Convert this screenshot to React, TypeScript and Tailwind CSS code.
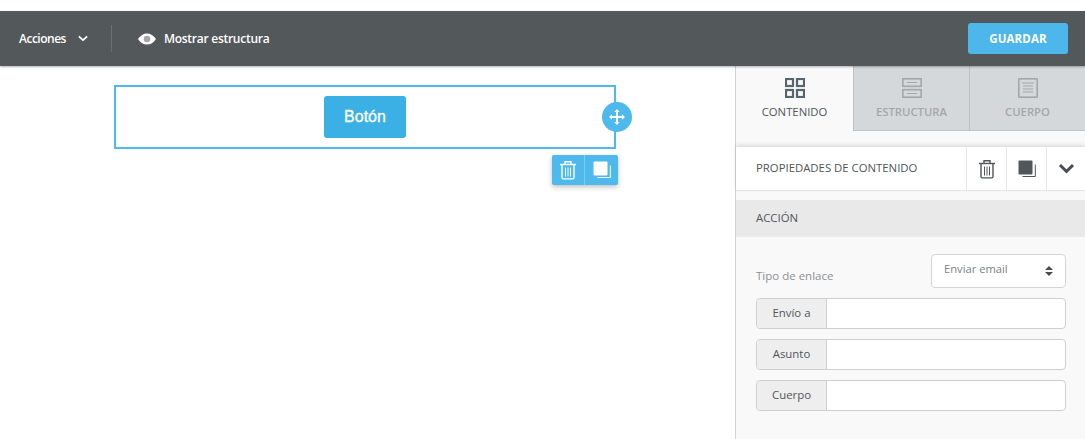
import React from "react";

function Trash({ className }: { className?: string }) {
  return (
    <svg viewBox="0 0 18 20" width="18" height="20" fill="none" stroke="currentColor" className={className}>
      <path d="M1 4.500h16" strokeWidth="1.400" />
      <path d="M6 4V1.700h6V4" strokeWidth="1.400" />
      <path d="M3 5v12.600c0 .8.5 1.300 1.200 1.300h9.600c.7 0 1.200-.5 1.200-1.300V5" strokeWidth="1.400" />
      <path d="M6.500 7.500v9M9 7.500v9M11.500 7.500v9" strokeWidth="1" />
    </svg>
  );
}

function Copy({ className }: { className?: string }) {
  return (
    <svg viewBox="0 0 18 18" width="18" height="18" fill="none" className={className}>
      <path d="M4.500 16.500h12.800V4.500" stroke="currentColor" strokeWidth="1" />
      <rect x="0.500" y="0.500" width="14" height="14" rx="1" fill="currentColor" />
    </svg>
  );
}

function Field({ label }: { label: string }) {
  return (
    <div className="flex h-[31px] rounded-[4px] border border-[#cfcfcf] bg-white">
      <div className="flex w-[70px] items-center justify-center rounded-l-[4px] border-r border-[#cfcfcf] bg-[#eeeeee] pb-[2px] text-[11.4px] text-[#505659]">
        {label}
      </div>
      <div className="flex-1" />
    </div>
  );
}

export default function App() {
  return (
    <div className="flex h-[439px] w-[1085px] flex-col overflow-hidden bg-white font-['Open_Sans',sans-serif]">
      <div className="h-[11px] shrink-0" />
      <header className="z-10 flex h-[55px] shrink-0 items-center bg-[#53585b] pr-[17px] pl-[19px] text-white shadow-[0_1px_2px_rgba(0,0,0,0.3)]">
        <div className="flex items-center">
          <span className="text-[12px] font-semibold tracking-[-0.5px]">Acciones</span>
          <svg viewBox="0 0 12 8" width="10" height="7" fill="none" stroke="currentColor" strokeWidth="2" className="ml-[12px]">
            <path d="M1 1.500l5 4.500 5-4.500" />
          </svg>
        </div>
        <div className="ml-[23px] h-[27px] w-px bg-[#6c7074]" />
        <svg viewBox="0 0 18 12" width="18" height="12" className="ml-[26px]">
          <path d="M0 6c2.400-3.700 5.400-5.600 9-5.600S15.600 2.300 18 6c-2.400 3.700-5.400 5.600-9 5.600S2.400 9.700 0 6z" fill="#fff" />
          <circle cx="9" cy="6" r="3.300" fill="#a4a6a8" />
        </svg>
        <span className="ml-[8px] text-[12px] font-semibold tracking-[-0.26px]">Mostrar estructura</span>
        <button className="ml-auto h-[31px] w-[100px] rounded-[3px] bg-[#4db6ea] text-[11.5px] font-bold tracking-[0.1px] text-white">
          GUARDAR
        </button>
      </header>

      <main className="flex min-h-0 flex-1">
        <div className="flex-1 pt-[19px] pl-[114px]">
          <div className="relative flex h-[64px] w-[502px] justify-center border-2 border-[#4db9ec] pt-[9px]">
            <div className="flex h-[42px] w-[82px] items-center justify-center rounded-[3px] bg-[#3bb0e4] font-['Liberation_Sans',sans-serif] text-[16px] text-white [-webkit-text-stroke:0.3px_white]">
              Botón
            </div>
            <div className="absolute top-[15px] right-[-18px] flex h-[30px] w-[30px] items-center justify-center rounded-full bg-[#4db9ec] text-white">
              <svg viewBox="0 0 16 16" width="16" height="16" fill="currentColor">
                <path d="M8 0l2.700 3H9v4h4V5.300L16 8l-3 2.700V9H9v4h1.700L8 16l-2.700-3H7V9H3v1.700L0 8l3-2.700V7h4V3H5.300z" />
              </svg>
            </div>
            <div className="absolute top-[68px] right-[-4px] flex h-[30px] w-[66px] rounded-[2px] bg-[#4db9ec] text-white shadow-[0_2px_5px_rgba(0,0,0,0.25)]">
              <div className="flex w-[33px] items-center justify-center border-r border-[#7fcdf2]">
                <Trash />
              </div>
              <div className="flex flex-1 items-center justify-center">
                <Copy />
              </div>
            </div>
          </div>
        </div>

        <aside className="flex w-[350px] shrink-0 flex-col border-l border-[#cfd1d2] bg-[#f9f9f9]">
          <div className="flex h-[65px] shrink-0">
            <div className="flex w-[117px] flex-col items-center pt-[12px] text-[#505659]">
              <svg viewBox="0 0 20 20" width="20" height="20" fill="none" stroke="#54666e" strokeWidth="2.200">
                <rect x="1" y="1" width="7" height="7" />
                <rect x="12" y="1" width="7" height="7" />
                <rect x="1" y="12" width="7" height="7" />
                <rect x="12" y="12" width="7" height="7" />
              </svg>
              <span className="mt-[6px] text-[11.3px] leading-[16px] font-medium">CONTENIDO</span>
            </div>
            <div className="flex w-[116px] flex-col items-center border-b border-l border-[#bcc2c5] bg-[#d5d8da] pt-[12px] text-[#a3a7aa]">
              <svg viewBox="0 0 20 20" width="20" height="20" fill="none" stroke="currentColor">
                <rect x="0.800" y="0.800" width="18.400" height="7.500" strokeWidth="1.600" />
                <rect x="0.800" y="11.700" width="18.400" height="7.500" strokeWidth="1.600" />
                <path d="M5 4.500h10M5 15.500h10" strokeWidth="1.200" />
              </svg>
              <span className="mt-[6px] text-[11.3px] leading-[16px] font-semibold">ESTRUCTURA</span>
            </div>
            <div className="flex flex-1 flex-col items-center border-b border-l border-[#bcc2c5] bg-[#d5d8da] pt-[12px] text-[#a3a7aa]">
              <svg viewBox="0 0 20 20" width="20" height="20" fill="none" stroke="currentColor">
                <rect x="0.800" y="0.800" width="18.400" height="18.400" strokeWidth="1.600" />
                <path d="M4 5h12M5 8h10M5 11h10M5 14h10" strokeWidth="1" />
              </svg>
              <span className="mt-[6px] text-[11.3px] leading-[16px] font-semibold">CUERPO</span>
            </div>
          </div>

          <div className="mt-[16px] flex h-[44px] shrink-0 items-center border-b border-[#e4e4e4] bg-white pl-[20px] text-[#505659] shadow-[0_-2px_4px_rgba(0,0,0,0.12)]">
            <span className="flex-1 pb-[2px] text-[11.35px] font-medium">PROPIEDADES DE CONTENIDO</span>
            <div className="flex h-full w-[40px] items-center justify-center border-l border-[#e9e9e9]">
              <Trash />
            </div>
            <div className="flex h-full w-[40px] items-center justify-center border-l border-[#e9e9e9]">
              <Copy />
            </div>
            <div className="flex h-full w-[39px] items-center justify-center border-l border-[#e9e9e9]">
              <svg viewBox="0 0 16 11" width="17" height="11" fill="none" stroke="#484c50" strokeWidth="3">
                <path d="M1.500 2l6.500 6.500L14.500 2" />
              </svg>
            </div>
          </div>

          <div className="mt-[9px] flex h-[37px] shrink-0 items-center bg-[#e9e9e9] pb-[2px] pl-[20px] text-[11.35px] font-medium text-[#505659]">
            ACCIÓN
          </div>

          <div className="flex flex-col gap-[10px] pt-[17px] pr-[19px] pl-[20px]">
            <div className="flex h-[34px] justify-between">
              <span className="self-end text-[11.5px] leading-[24px] text-[#8b9094]">Tipo de enlace</span>
              <div className="flex w-[135px] items-center justify-between rounded-[4px] border border-[#d5d5d5] bg-white pr-[12px] pl-[12px]">
                <span className="-mt-[3px] text-[11.2px] text-[#7d8285]">Enviar email</span>
                <svg viewBox="0 0 8 12" width="8" height="12" fill="#484c50">
                  <path d="M4 1l4 4H0zM4 11L0 7h8z" />
                </svg>
              </div>
            </div>
            <Field label="Envío a" />
            <Field label="Asunto" />
            <Field label="Cuerpo" />
          </div>
        </aside>
      </main>
    </div>
  );
}
